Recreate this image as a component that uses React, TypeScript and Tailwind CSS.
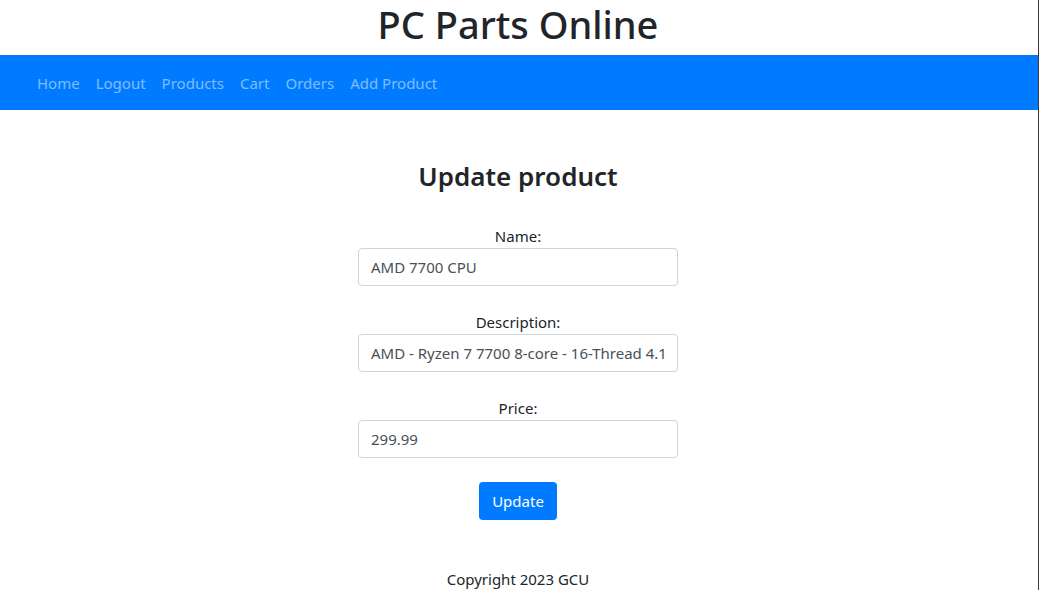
import React from "react";

const fields = [
	{ label: "Name:", value: "AMD 7700 CPU" },
	{ label: "Description:", value: "AMD - Ryzen 7 7700 8-core - 16-Thread 4.1 GHz" },
	{ label: "Price:", value: "299.99" },
];

const App = (): JSX.Element => {
	const links = ["Home", "Logout", "Products", "Cart", "Orders", "Add Product"];

	return (
		<div className="h-[590px] w-[1039px] overflow-hidden border-r border-[#3a3a3a] bg-white text-[#212529] font-['Noto_Sans',sans-serif]">
			<div className="h-[55px] pr-[2px] flex justify-center">
				<h1 className="text-[38px] font-medium leading-[49px]">PC Parts Online</h1>
			</div>
			<nav className="h-[55px] pt-[2px] bg-[#007bff] flex items-center pl-[29px]">
				{links.map((l) => (
					<a key={l} className="px-2 text-[15px] text-[rgba(255,255,255,0.5)]">
						{l}
					</a>
				))}
			</nav>
			<div className="pr-[2px] flex flex-col items-center">
				<h2 className="mt-[47px] text-[26px] font-semibold leading-[38px]">Update product</h2>
				<form className="mt-[10px] flex flex-col items-center">
					{fields.map((f) => (
						<div key={f.label} className="mt-[24px] first:mt-[19px] flex flex-col items-center">
							<label className="text-[15px] leading-[24px]">{f.label}</label>
							<input
								readOnly
								value={f.value}
								className="w-[320px] h-[38px] px-3 rounded-[4px] border border-[#ced4da] text-[15px] text-[#495057] outline-none"
							/>
						</div>
					))}
					<button
						type="button"
						className="mt-[24px] h-[38px] w-[78px] rounded-[4px] bg-[#007bff] text-white text-[15px]"
					>
						Update
					</button>
				</form>
				<p className="mt-[47px] text-[15px] leading-[24px]">Copyright 2023 GCU</p>
			</div>
		</div>
	);
};

export default App;
